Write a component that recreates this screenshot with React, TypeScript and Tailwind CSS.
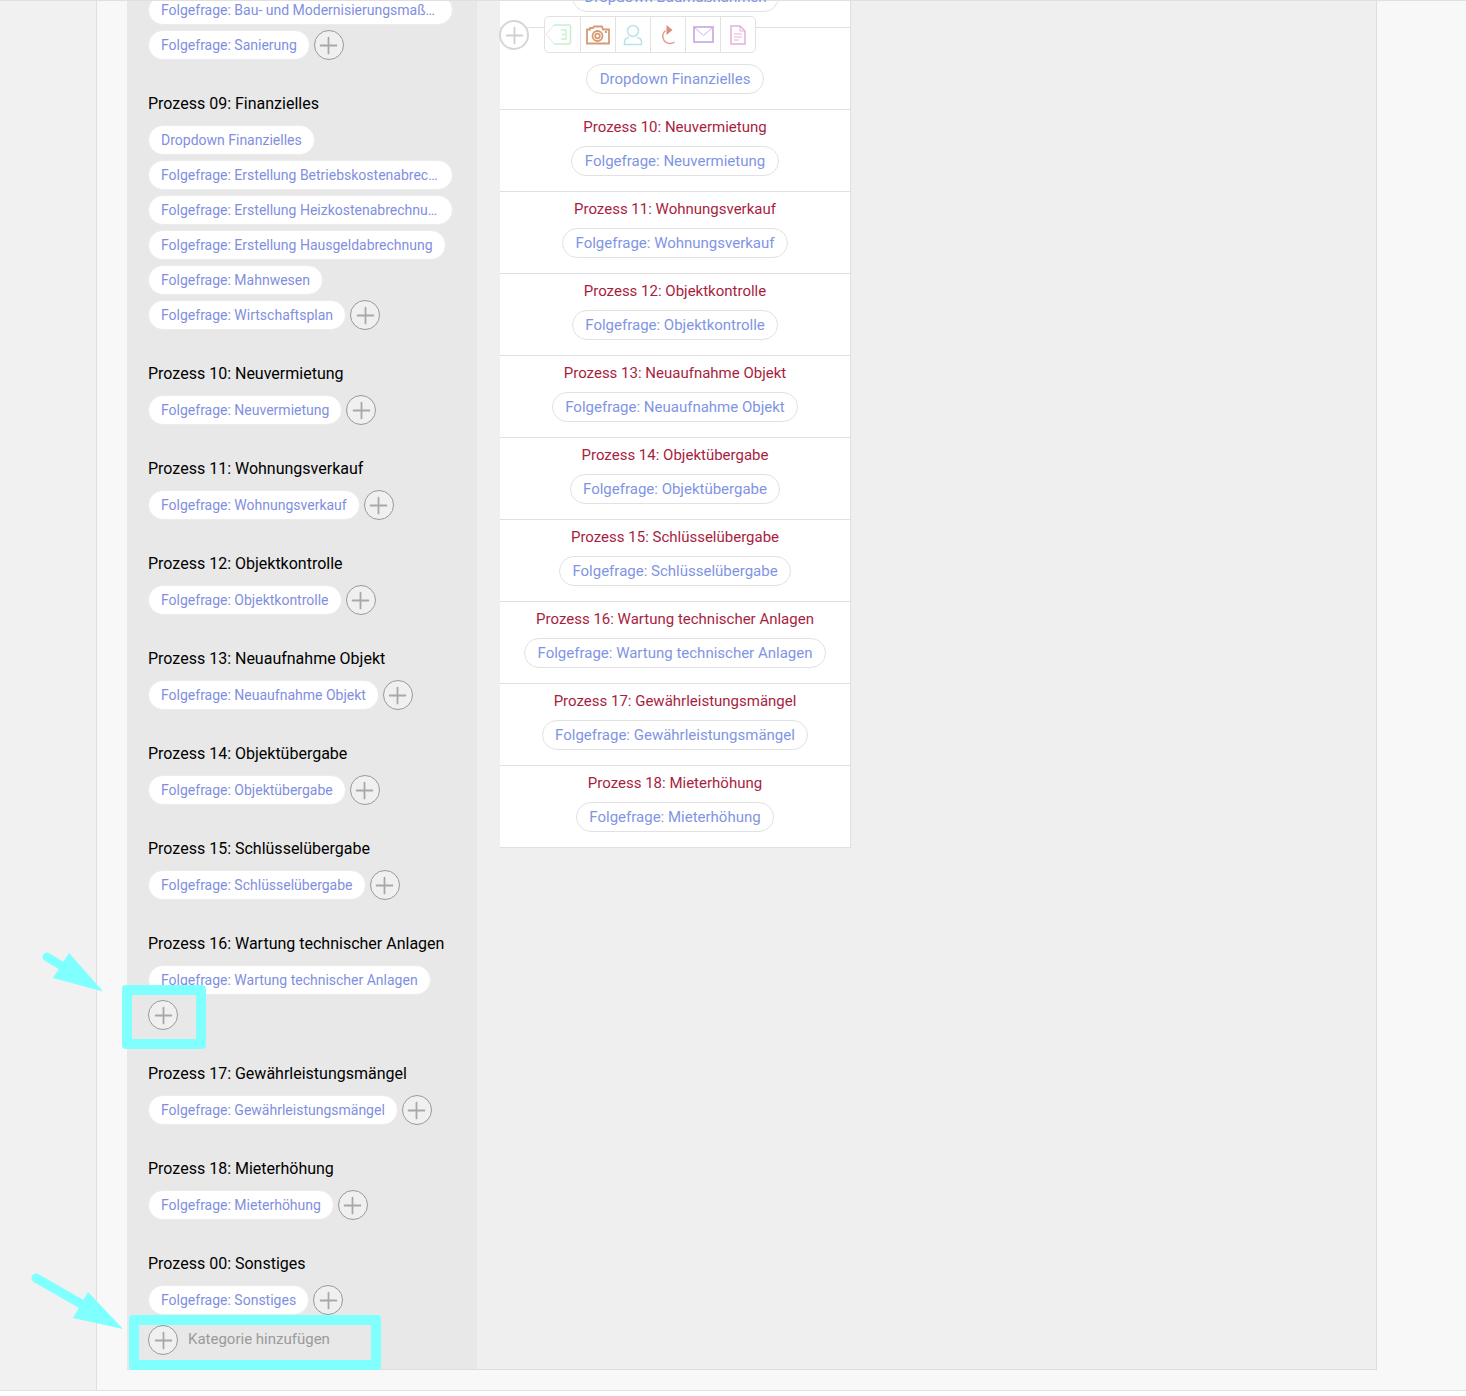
import { Plus } from "lucide-react";

type Section = { title: string; pills: string[]; wrapAdd?: boolean };

const leftSections: Section[] = [
  { title: "Prozess 09: Finanzielles", pills: ["Dropdown Finanzielles", "Folgefrage: Erstellung Betriebskostenabrechnung", "Folgefrage: Erstellung Heizkostenabrechnung", "Folgefrage: Erstellung Hausgeldabrechnung", "Folgefrage: Mahnwesen", "Folgefrage: Wirtschaftsplan"] },
  { title: "Prozess 10: Neuvermietung", pills: ["Folgefrage: Neuvermietung"] },
  { title: "Prozess 11: Wohnungsverkauf", pills: ["Folgefrage: Wohnungsverkauf"] },
  { title: "Prozess 12: Objektkontrolle", pills: ["Folgefrage: Objektkontrolle"] },
  { title: "Prozess 13: Neuaufnahme Objekt", pills: ["Folgefrage: Neuaufnahme Objekt"] },
  { title: "Prozess 14: Objektübergabe", pills: ["Folgefrage: Objektübergabe"] },
  { title: "Prozess 15: Schlüsselübergabe", pills: ["Folgefrage: Schlüsselübergabe"] },
  { title: "Prozess 16: Wartung technischer Anlagen", pills: ["Folgefrage: Wartung technischer Anlagen"], wrapAdd: true },
  { title: "Prozess 17: Gewährleistungsmängel", pills: ["Folgefrage: Gewährleistungsmängel"] },
  { title: "Prozess 18: Mieterhöhung", pills: ["Folgefrage: Mieterhöhung"] },
  { title: "Prozess 00: Sonstiges", pills: ["Folgefrage: Sonstiges"] },
];

const rightRows = [
  { n: 10, name: "Neuvermietung" },
  { n: 11, name: "Wohnungsverkauf" },
  { n: 12, name: "Objektkontrolle" },
  { n: 13, name: "Neuaufnahme Objekt" },
  { n: 14, name: "Objektübergabe" },
  { n: 15, name: "Schlüsselübergabe" },
  { n: 16, name: "Wartung technischer Anlagen" },
  { n: 17, name: "Gewährleistungsmängel" },
  { n: 18, name: "Mieterhöhung" },
];

function AddCircle({ faded }: { faded?: boolean }) {
  return (
    <span
      className={`flex size-[30px] shrink-0 items-center justify-center rounded-full ${
        faded ? "border-2 border-[#d6d6d6] bg-white text-[#d0d0d0]" : "border border-[#999999] bg-[#f0f0f0] text-[#a8a8a8]"
      }`}
    >
      <Plus className="size-[27px] shrink-0" strokeWidth={1.6} />
    </span>
  );
}

function LeftPill({ label }: { label: string }) {
  return (
    <span className="block h-[30px] w-fit max-w-[305px] truncate rounded-full border border-[#ececec] bg-white px-3 text-sm leading-[28px] text-[#7f8fdf]">
      {label}
    </span>
  );
}

function LeftSection({ section }: { section: Section }) {
  const last = section.pills.length - 1;
  return (
    <section className="mb-[33px]">
      <h3 className="mb-[11px] h-[21px] text-base leading-[21px] text-black">{section.title}</h3>
      <div className="flex flex-col gap-[5px]">
        {section.pills.map((pill, i) =>
          i === last ? (
            <div key={pill} className={section.wrapAdd ? "flex flex-col gap-[5px]" : "flex items-center gap-1"}>
              <LeftPill label={pill} />
              <AddCircle />
            </div>
          ) : (
            <LeftPill key={pill} label={pill} />
          ),
        )}
      </div>
    </section>
  );
}

function RightPill({ label }: { label: string }) {
  return (
    <span className="inline-block h-[30px] rounded-full border border-[#e2e2e2] bg-white px-[12.5px] text-[15px] leading-[28px] text-[#7f95e4]">
      {label}
    </span>
  );
}

function Toolbar() {
  return (
    <div className="flex h-[37px] items-stretch rounded-[5px] border border-[#e2e2e2] bg-white">
      <span className="flex w-[36px] items-center border-r border-[#e2e2e2]">
        <svg width="27" height="24" viewBox="0 0 27 24" fill="none">
          <path d="M9 2 L1 11 L9 21" stroke="#e6e6e6" strokeWidth="1" />
          <path d="M9 2h15a1.500 1.500 0 0 1 1.500 1.500v16a1.500 1.500 0 0 1-1.500 1.500H9" stroke="#c6efce" strokeWidth="1.500" />
          <path d="M16 7h5v9h-5M17 11.500h3" stroke="#c6efce" strokeWidth="1.300" />
        </svg>
      </span>
      <span className="flex w-[35px] items-center justify-center border-r border-[#e2e2e2]">
        <svg width="24" height="20" viewBox="0 0 24 20" fill="none" stroke="#d69c74" strokeWidth="1.800">
          <path d="M1 4.500h3V3h3l1-1.500h8l1 3h6v14H1z" />
          <circle cx="11.500" cy="11" r="5" />
          <circle cx="11.500" cy="11" r="2.300" />
          <path d="M19 7h2" />
        </svg>
      </span>
      <span className="flex w-[35px] items-center justify-center border-r border-[#e2e2e2]">
        <svg width="20" height="22" viewBox="0 0 20 22" fill="none" stroke="#b8e2ec" strokeWidth="1.500">
          <circle cx="10" cy="7" r="5.500" />
          <path d="M6 13.500c-3 .5-4.500 2.500-4.500 4.500v2.500h17V18c0-2-1.500-4-4.500-4.500" />
        </svg>
      </span>
      <span className="flex w-[35px] items-center justify-center border-r border-[#e2e2e2]">
        <svg width="18" height="22" viewBox="0 0 18 22" fill="none">
          <path d="M6.500 6.500a7 7 0 1 0 9 11.500" stroke="#dca094" strokeWidth="1.500" />
          <path d="M7.500 1l6 5-6 5z" fill="#d98e84" />
        </svg>
      </span>
      <span className="flex w-[35px] items-center justify-center border-r border-[#e2e2e2]">
        <svg width="21" height="17" viewBox="0 0 21 17" fill="none" stroke="#cfaee6" strokeWidth="1.800">
          <rect x="1" y="1" width="19" height="15" />
          <path d="M1.500 1.500l9 8 9-8" strokeWidth="1" />
        </svg>
      </span>
      <span className="flex w-[34px] items-center justify-center">
        <svg width="16" height="20" viewBox="0 0 16 20" fill="none" stroke="#e6aedb" strokeWidth="1.500">
          <path d="M1 1h9l5 5v13H1z" />
          <path d="M10 1v5h5" strokeWidth="1" />
          <path d="M4 9h8M4 12h8M4 15h5" strokeWidth="1" />
        </svg>
      </span>
    </div>
  );
}

export default function App() {
  return (
    <div className="relative h-[1396px] overflow-hidden bg-white font-['Roboto',sans-serif]">
      <div className="flex h-[1391px] border-y border-[#e0e0e0] bg-[#f1f1f1]">
        <div className="ml-[96px] h-full flex-1 border-l border-[#e0e0e0] bg-[#f8f8f8] pl-[30px] pr-[89px]">
          <div className="flex h-[1369px] border-r border-b border-[#dddddd] bg-[#efefef]">
            <aside className="w-[350px] shrink-0 overflow-hidden bg-[#e8e8e8] px-[21px]">
              <div className="-mt-[6px] flex flex-col gap-[5px]">
                <LeftPill label="Folgefrage: Bau- und Modernisierungsmaßnahmen" />
                <div className="flex items-center gap-1">
                  <LeftPill label="Folgefrage: Sanierung" />
                  <AddCircle />
                </div>
              </div>
              <div className="mt-[33px]">
                {leftSections.map((s) => (
                  <LeftSection key={s.title} section={s} />
                ))}
              </div>
              <div className="-mt-[23px] flex items-start gap-[10px]">
                <AddCircle />
                <span className="text-[15px] leading-[28px] text-[#9a9a9a]">Kategorie hinzufügen</span>
              </div>
            </aside>
            <main className="ml-[23px] h-[847px] w-[351px] shrink-0 border-r border-b border-[#e0e0e0] bg-white">
              <div className="relative h-[109px] border-b border-[#e0e0e0]">
                <div className="absolute left-[72px] -top-[19px] h-[30px] w-[207px] rounded-full border border-[#e2e2e2] text-center text-[15px] leading-[28px] text-[#7f95e4]">
                  Dropdown Baumaßnahmen
                </div>
                <div className="absolute inset-x-0 top-[26px] h-px bg-[#e0e0e0]" />
                <div className="absolute -left-px top-[19px]">
                  <AddCircle faded />
                </div>
                <div className="absolute left-[44px] top-[15px]">
                  <Toolbar />
                </div>
                <div className="flex h-full items-end justify-center pb-[15px]">
                  <RightPill label="Dropdown Finanzielles" />
                </div>
              </div>
              {rightRows.map((row, i) => (
                <div
                  key={row.n}
                  className={`flex h-[82px] flex-col items-center pt-[7px] ${i < rightRows.length - 1 ? "border-b border-[#e0e0e0]" : ""}`}
                >
                  <p className="mb-[8px] h-[21px] text-[15px] leading-[21px] text-[#a81e40]">
                    Prozess {row.n}: {row.name}
                  </p>
                  <RightPill label={`Folgefrage: ${row.name}`} />
                </div>
              ))}
            </main>
          </div>
        </div>
      </div>

      {/* Markierungen aus dem Screenshot */}
      <div className="absolute left-[122px] top-[985px] h-[64px] w-[84px] rounded-[4px] border-[10px] border-[#80ffff]" />
      <div className="absolute left-[129px] top-[1315px] h-[55px] w-[252px] rounded-[4px] border-[10px] border-[#80ffff]" />
      <svg className="absolute left-[30px] top-[945px]" width="80" height="52" viewBox="30 945 80 52" fill="none">
        <line x1="47" y1="957" x2="72" y2="972" stroke="#80ffff" strokeWidth="9" strokeLinecap="round" />
        <polygon points="103,991.500 69,953 53,978" fill="#80ffff" />
      </svg>
      <svg className="absolute left-[30px] top-[1270px]" width="96" height="62" viewBox="30 1270 96 62" fill="none">
        <line x1="36" y1="1278" x2="90" y2="1309" stroke="#80ffff" strokeWidth="9" strokeLinecap="round" />
        <polygon points="123,1329 88,1292 73,1318" fill="#80ffff" />
      </svg>
    </div>
  );
}
